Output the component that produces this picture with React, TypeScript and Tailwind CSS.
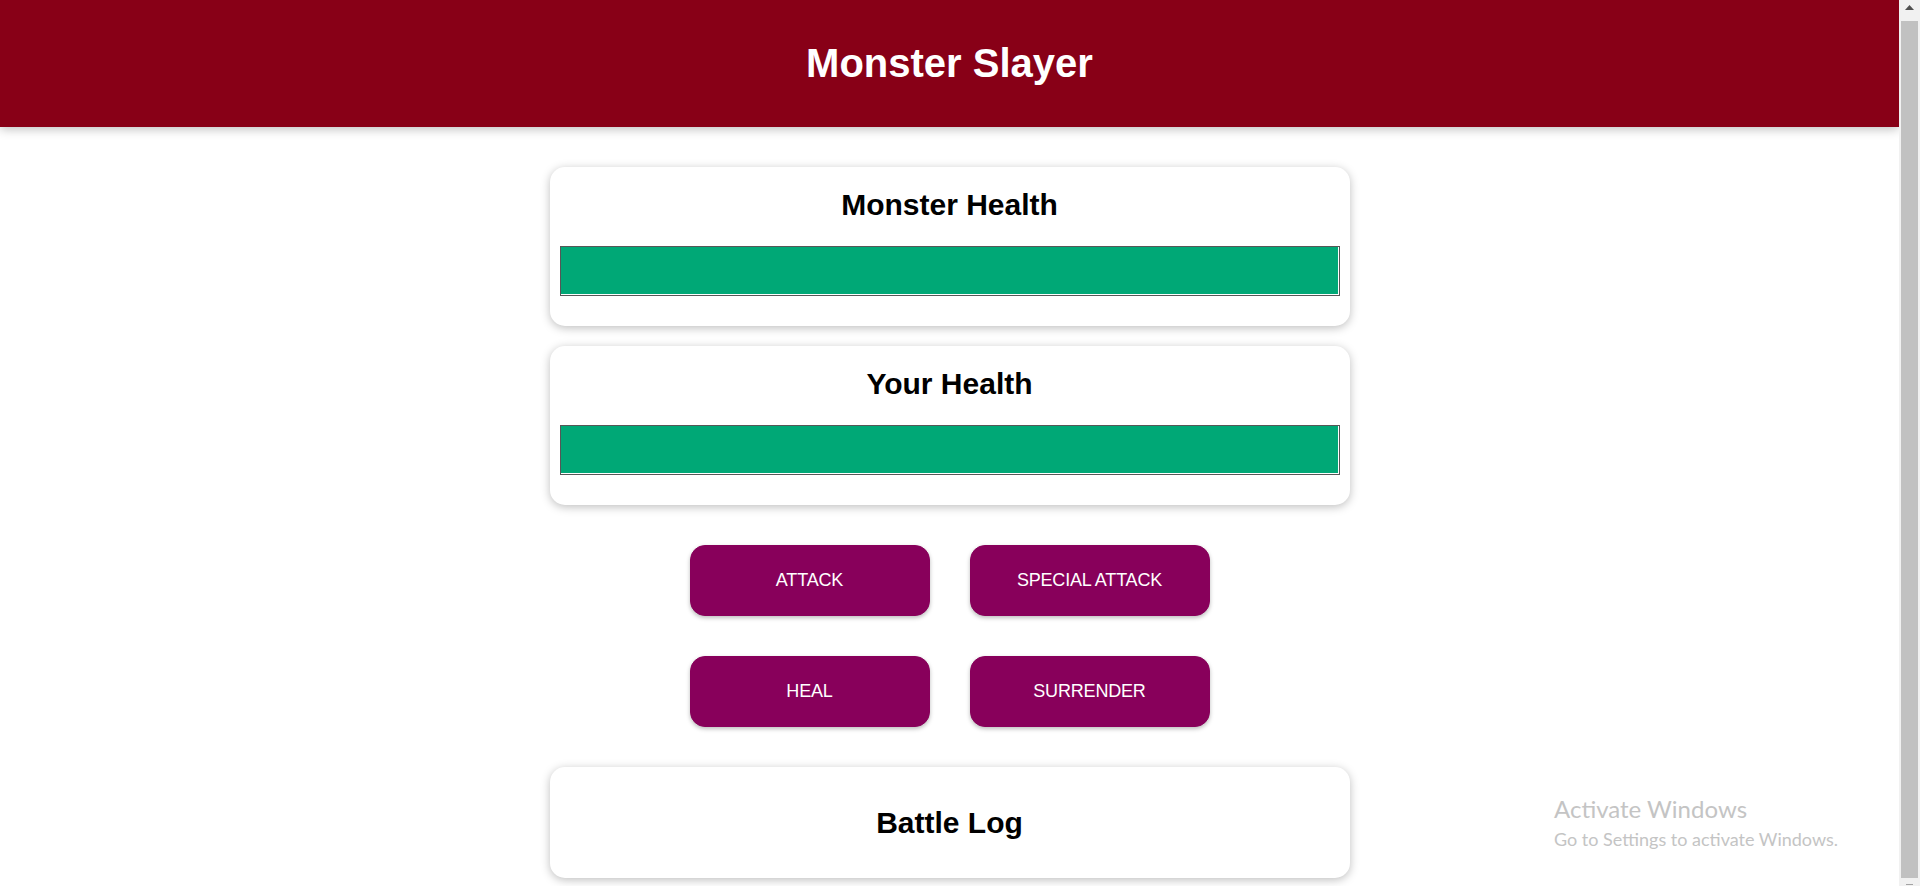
import type { ReactNode } from 'react';

function Card({ children, className = '' }: { children: ReactNode; className?: string }) {
  return (
    <div className={`rounded-[15px] bg-white text-center shadow-[0_2px_10px_rgba(0,0,0,0.26)] ${className}`}>
      {children}
    </div>
  );
}

function HealthCard({ title, value }: { title: string; value: number }) {
  return (
    <Card className="px-[10px] pt-[20px] pb-[30px]">
      <h2 className="text-[30px] leading-[36px] font-bold text-black">{title}</h2>
      <div className="mt-[23px] h-[50px] w-full border border-[#575757] bg-white">
        <div className="h-[calc(100%-1px)] bg-[#00a876]" style={{ width: `calc(${value}% - 1px)` }} />
      </div>
    </Card>
  );
}

const actions = ['ATTACK', 'SPECIAL ATTACK', 'HEAL', 'SURRENDER'];

export default function App() {
  return (
    <div className="flex h-screen overflow-hidden bg-white font-['Liberation_Sans',Arial,sans-serif]">
      <div className="relative flex-1 overflow-hidden">
        <header className="relative z-10 flex h-[127px] items-center justify-center bg-[#880017] pb-[2px] shadow-[0_2px_10px_rgba(0,0,0,0.26)]">
          <h1 className="text-[40px] leading-[46px] font-bold text-white">Monster Slayer</h1>
        </header>

        <section className="mx-auto mt-[40px] w-[800px]">
          <div className="flex flex-col gap-[20px]">
            <HealthCard title="Monster Health" value={100} />
            <HealthCard title="Your Health" value={100} />
          </div>

          <div className="mt-[40px] grid grid-cols-[240px_240px] justify-center gap-[40px]">
            {actions.map(label => (
              <button
                key={label}
                className="h-[71px] rounded-[15px] border border-[#88005b] bg-[#88005b] text-[18px] tracking-[-0.01em] text-white shadow-[0_2px_4px_rgba(0,0,0,0.26)]"
              >
                {label}
              </button>
            ))}
          </div>

          <Card className="mt-[40px] flex h-[111px] items-center justify-center">
            <h2 className="text-[30px] leading-[36px] font-bold text-black">Battle Log</h2>
          </Card>
        </section>

        <div className="absolute top-[794px] left-[1554px] font-['Lato',sans-serif] text-[#c4c4c4]">
          <p className="text-[24px] leading-[29px] whitespace-nowrap">Activate Windows</p>
          <p className="mt-[6px] text-[18px] leading-[21px] whitespace-nowrap">Go to Settings to activate Windows.</p>
        </div>
      </div>

      <aside className="flex w-[21px] shrink-0 flex-col bg-[#f1f1f1]">
        <div className="flex h-[21px] items-center justify-center pb-[6px]">
          <svg width="9" height="5" viewBox="0 0 9 5">
            <path d="M4.5 0 L9 5 L0 5 Z" fill="#505050" />
          </svg>
        </div>
        <div className="mx-[2px] h-[857px] bg-[#c1c1c1]" />
        <div className="mt-[6px] mx-auto h-px w-[7px] bg-[#a3a3a3]" />
      </aside>
    </div>
  );
}
